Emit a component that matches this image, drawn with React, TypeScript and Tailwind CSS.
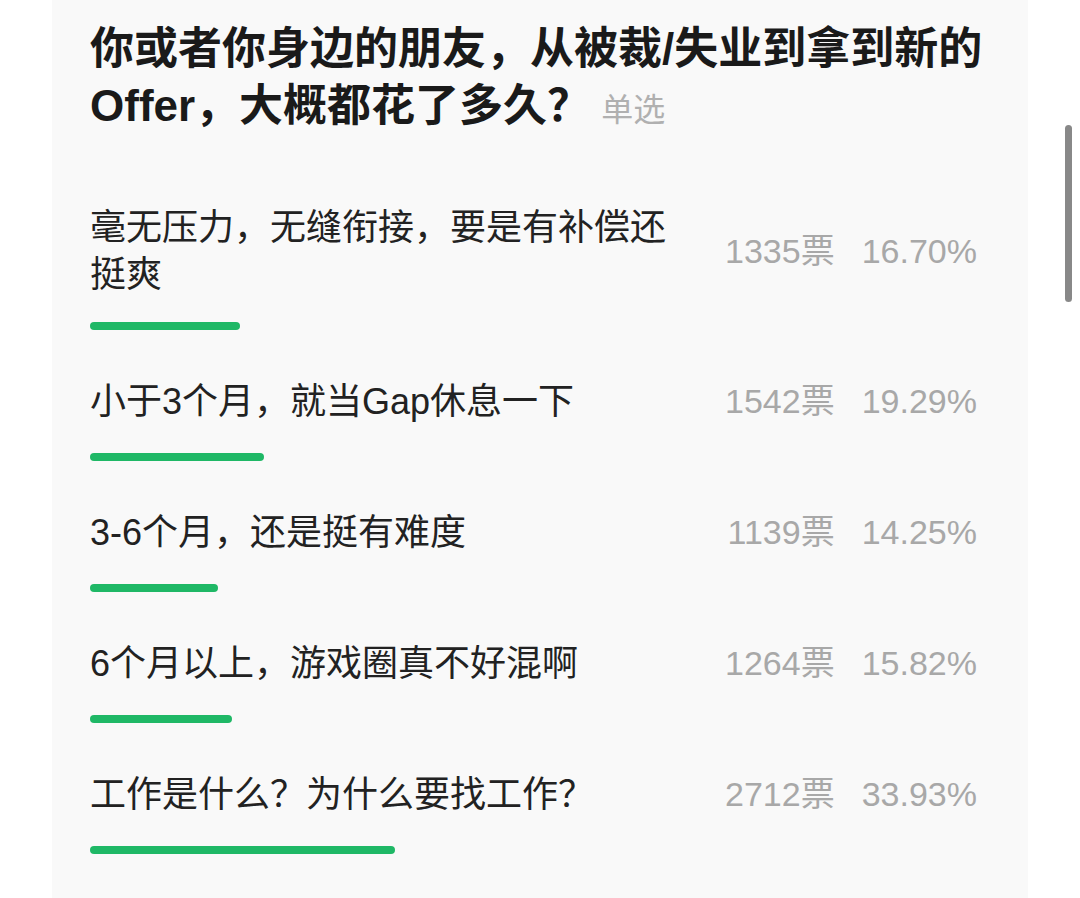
const options = [
  { id: 1, text: "毫无压力，无缝衔接，要是有补偿还挺爽", votes: 1335, pct: 16.7 },
  { id: 2, text: "小于3个月，就当Gap休息一下", votes: 1542, pct: 19.29 },
  { id: 3, text: "3-6个月，还是挺有难度", votes: 1139, pct: 14.25 },
  { id: 4, text: "6个月以上，游戏圈真不好混啊", votes: 1264, pct: 15.82 },
  { id: 5, text: "工作是什么？为什么要找工作？", votes: 2712, pct: 33.93 },
]

function App() {
  return (
    <div
      className="relative min-h-screen bg-white"
      style={{ fontFamily: '"Liberation Sans", "Noto Sans CJK SC", sans-serif' }}
    >
      <div className="mx-[52px] min-h-[898px] bg-[#f9f9f9] px-[38px] pt-[20px] pb-[40px]">
        <h1 className="text-[44px] leading-[57px] font-semibold text-[#1a1a1a]">
          你或者你身边的朋友，从被裁/失业到拿到新的Offer，大概都花了多久？
          <span className="ml-[10px] text-[32px] leading-none font-normal text-[#b0b0b0]">单选</span>
        </h1>

        <div className="mt-[70px] flex flex-col gap-[43px]">
          {options.map((opt) => (
            <div key={opt.id}>
              <div className="flex min-h-[56px] items-center">
                <p className="w-[600px] text-[36px] leading-[47px] text-[#222222]">{opt.text}</p>
                <div className="mr-[13px] flex flex-1 justify-end gap-[27px] text-[34px] text-[#a8a8a8]">
                  <span>{opt.votes}票</span>
                  <span>{opt.pct.toFixed(2)}%</span>
                </div>
              </div>
              <div className="mt-[24px] h-[8px] w-[900px]">
                <div
                  className="h-full rounded-full bg-[#1fb866]"
                  style={{ width: `${opt.pct * 9}px` }}
                />
              </div>
            </div>
          ))}
        </div>
      </div>

      <div className="absolute top-[125px] right-[8px] h-[177px] w-[7px] rounded-full bg-[#888888]" />
    </div>
  )
}

export default App
